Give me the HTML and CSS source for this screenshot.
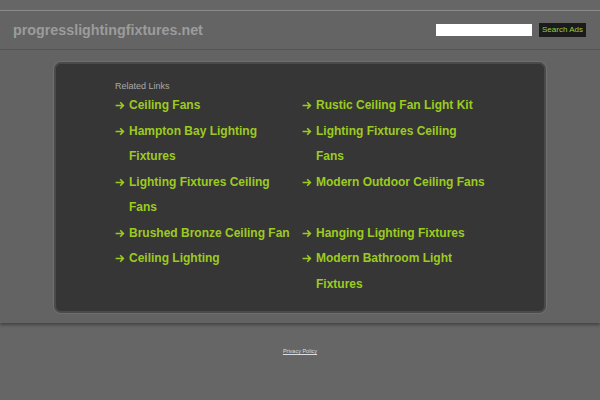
FILE: index.html
```html
<!DOCTYPE html>
<html>
<head>
<meta charset="utf-8">
<title>progresslightingfixtures.net</title>
<link rel="stylesheet" href="styles.css">
</head>
<body>
<div class="topgap"></div>
<header class="header">
  <div class="title">progresslightingfixtures.net</div>
  <form class="search">
    <input class="search-input" type="text">
    <button class="search-btn" type="button">Search Ads</button>
  </form>
</header>
<main class="band">
  <section class="box">
    <div class="related">Related Links</div>
    <ul class="links">
      <li><span class="arrow"><svg width="10" height="9" viewBox="0 0 10 9"><path d="M0.6 4.5H8.4M5.2 1.2L8.4 4.5L5.2 7.8" fill="none" stroke="#9ccb1f" stroke-width="1.6"/></svg></span><span class="txt">Ceiling Fans</span></li>
      <li><span class="arrow"><svg width="10" height="9" viewBox="0 0 10 9"><path d="M0.6 4.5H8.4M5.2 1.2L8.4 4.5L5.2 7.8" fill="none" stroke="#9ccb1f" stroke-width="1.6"/></svg></span><span class="txt">Rustic Ceiling Fan Light Kit</span></li>
      <li><span class="arrow"><svg width="10" height="9" viewBox="0 0 10 9"><path d="M0.6 4.5H8.4M5.2 1.2L8.4 4.5L5.2 7.8" fill="none" stroke="#9ccb1f" stroke-width="1.6"/></svg></span><span class="txt">Hampton Bay Lighting Fixtures</span></li>
      <li><span class="arrow"><svg width="10" height="9" viewBox="0 0 10 9"><path d="M0.6 4.5H8.4M5.2 1.2L8.4 4.5L5.2 7.8" fill="none" stroke="#9ccb1f" stroke-width="1.6"/></svg></span><span class="txt">Lighting Fixtures Ceiling Fans</span></li>
      <li><span class="arrow"><svg width="10" height="9" viewBox="0 0 10 9"><path d="M0.6 4.5H8.4M5.2 1.2L8.4 4.5L5.2 7.8" fill="none" stroke="#9ccb1f" stroke-width="1.6"/></svg></span><span class="txt">Lighting Fixtures Ceiling Fans</span></li>
      <li><span class="arrow"><svg width="10" height="9" viewBox="0 0 10 9"><path d="M0.6 4.5H8.4M5.2 1.2L8.4 4.5L5.2 7.8" fill="none" stroke="#9ccb1f" stroke-width="1.6"/></svg></span><span class="txt">Modern Outdoor Ceiling Fans</span></li>
      <li><span class="arrow"><svg width="10" height="9" viewBox="0 0 10 9"><path d="M0.6 4.5H8.4M5.2 1.2L8.4 4.5L5.2 7.8" fill="none" stroke="#9ccb1f" stroke-width="1.6"/></svg></span><span class="txt">Brushed Bronze Ceiling Fan</span></li>
      <li><span class="arrow"><svg width="10" height="9" viewBox="0 0 10 9"><path d="M0.6 4.5H8.4M5.2 1.2L8.4 4.5L5.2 7.8" fill="none" stroke="#9ccb1f" stroke-width="1.6"/></svg></span><span class="txt">Hanging Lighting Fixtures</span></li>
      <li><span class="arrow"><svg width="10" height="9" viewBox="0 0 10 9"><path d="M0.6 4.5H8.4M5.2 1.2L8.4 4.5L5.2 7.8" fill="none" stroke="#9ccb1f" stroke-width="1.6"/></svg></span><span class="txt">Ceiling Lighting</span></li>
      <li><span class="arrow"><svg width="10" height="9" viewBox="0 0 10 9"><path d="M0.6 4.5H8.4M5.2 1.2L8.4 4.5L5.2 7.8" fill="none" stroke="#9ccb1f" stroke-width="1.6"/></svg></span><span class="txt">Modern Bathroom Light Fixtures</span></li>
    </ul>
  </section>
</main>
<footer class="footer">
  <a class="privacy" href="#">Privacy Policy</a>
</footer>
</body>
</html>
```

FILE: styles.css
```css
html, body {
  margin: 0;
  padding: 0;
}
body {
  background: #666666;
  font-family: "Liberation Sans", Arial, sans-serif;
  height: 400px;
  overflow: hidden;
}
.topgap {
  height: 10px;
}
.header {
  box-sizing: border-box;
  height: 40px;
  background: #646464;
  border-top: 1px solid #8b8b8b;
  border-bottom: 1px solid #565656;
  display: flex;
  align-items: center;
  justify-content: space-between;
  padding: 0 14px 0 13px;
}
.title {
  font-size: 14.3px;
  font-weight: bold;
  color: #9c9c9c;
  line-height: 16px;
}
.search {
  display: flex;
  align-items: center;
  gap: 7px;
  margin: 0;
}
.search-input {
  box-sizing: border-box;
  width: 96px;
  height: 12px;
  border: 0;
  padding: 0;
  margin: 0;
  background: #ffffff;
}
.search-btn {
  box-sizing: border-box;
  width: 47px;
  height: 14px;
  border: 0;
  padding: 0;
  margin: 0;
  background: #1b1b1b;
  color: #9fcc3a;
  font-family: "Liberation Sans", Arial, sans-serif;
  font-size: 8px;
  line-height: 14px;
  text-align: center;
}
.band {
  display: block;
  background: #636363;
  padding: 12px 0 10px;
  box-shadow: 0 2px 3px rgba(0, 0, 0, 0.35);
  position: relative;
}
.box {
  box-sizing: border-box;
  width: 492px;
  margin: 0 auto;
  background: #363636;
  border: 2px solid #4a4a4a;
  border-radius: 7px;
  box-shadow: 0 0 0 1px #6f6f6f;
  padding: 16px 0 14px 59px;
}
.related {
  font-size: 9px;
  line-height: 12px;
  color: #a9a9a9;
}
.links {
  list-style: none;
  margin: 1px 0 0;
  padding: 0;
  display: grid;
  grid-template-columns: 187px 187px;
}
.links li {
  display: flex;
  align-items: flex-start;
  width: 184px;
  font-size: 12px;
  font-weight: bold;
  line-height: 25.5px;
  color: #9ccb1f;
}
.arrow {
  flex: 0 0 14px;
  height: 25.5px;
  display: flex;
  align-items: center;
}
.arrow svg {
  display: block;
}
.txt {
  flex: 1;
}
.footer {
  text-align: center;
  padding-top: 16px;
}
.privacy {
  font-size: 5.5px;
  line-height: 8px;
  color: #dddddd;
  text-decoration: underline;
}
```
